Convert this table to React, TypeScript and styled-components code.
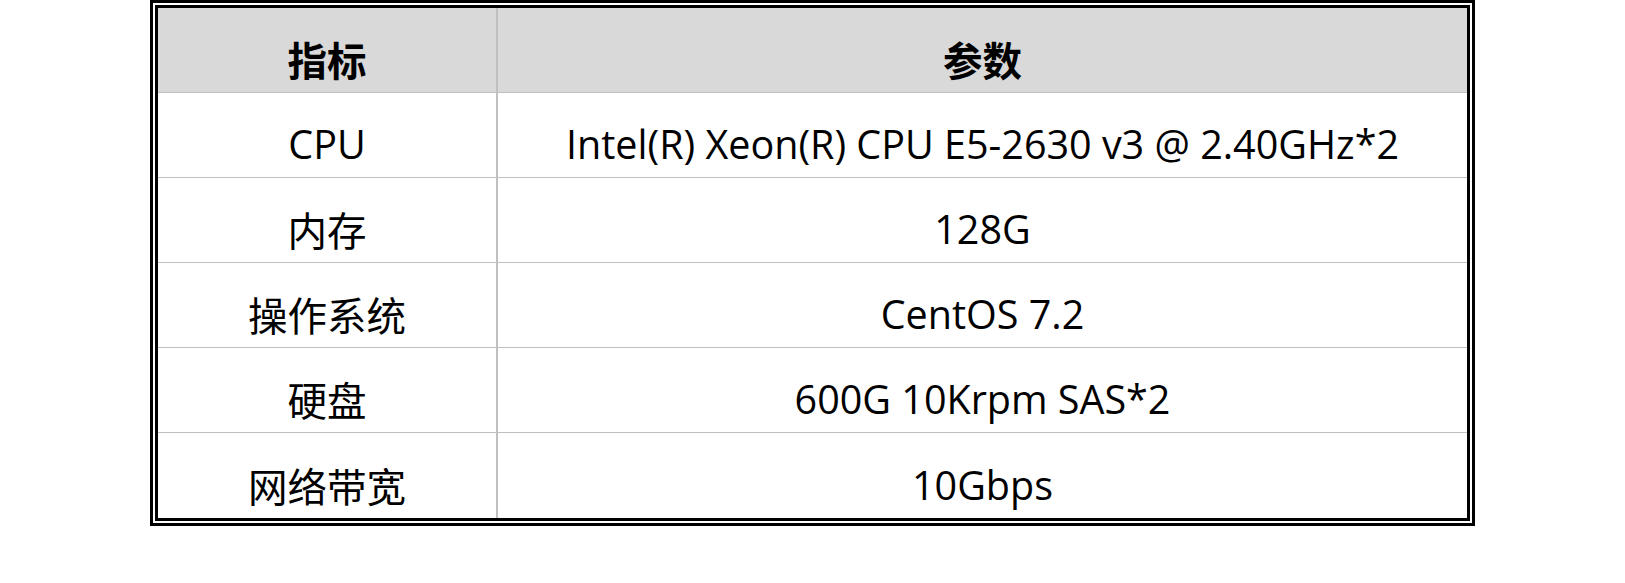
import React from "react";
import styled, { createGlobalStyle } from "styled-components";

const Global = createGlobalStyle`
  html, body { margin: 0; padding: 0; background: #ffffff; }
  body { font-family: "Open Sans", "Noto Sans CJK SC", sans-serif; }
`;

const Page = styled.div`
  width: 1625px;
  height: 583px;
  padding-left: 150px;
  box-sizing: border-box;
`;

const Frame = styled.div`
  width: 1325px;
  box-sizing: border-box;
  border: 3px solid #000;
  padding: 2px;
`;

const Inner = styled.div`
  border: 3px solid #000;
`;

const Grid = styled.div`
  display: grid;
  grid-template-columns: 338px 969px;
  grid-template-rows: repeat(5, 84px) 85px;
  column-gap: 2px;
  row-gap: 1px;
  background: #c0c0c0;
`;

const Cell = styled.div<{ $head?: boolean }>`
  display: flex;
  align-items: center;
  justify-content: center;
  padding-top: 18px;
  box-sizing: border-box;
  background: ${(p) => (p.$head ? "#d9d9d9" : "#ffffff")};
  color: #000;
  font-family: "Open Sans", "Noto Sans CJK SC", sans-serif;
  font-size: 39.5px;
  font-weight: ${(p) => (p.$head ? 700 : 400)};
  white-space: nowrap;
`;

const rows: [string, string][] = [
  ["CPU", "Intel(R) Xeon(R) CPU E5-2630 v3 @ 2.40GHz*2"],
  ["内存", "128G"],
  ["操作系统", "CentOS 7.2"],
  ["硬盘", "600G 10Krpm SAS*2"],
  ["网络带宽", "10Gbps"],
];

export default function App() {
  return (
    <Page>
      <Global />
      <Frame>
        <Inner>
          <Grid>
            <Cell $head>指标</Cell>
            <Cell $head>参数</Cell>
            {rows.map(([k, v]) => (
              <React.Fragment key={k}>
                <Cell>{k}</Cell>
                <Cell>{v}</Cell>
              </React.Fragment>
            ))}
          </Grid>
        </Inner>
      </Frame>
    </Page>
  );
}
